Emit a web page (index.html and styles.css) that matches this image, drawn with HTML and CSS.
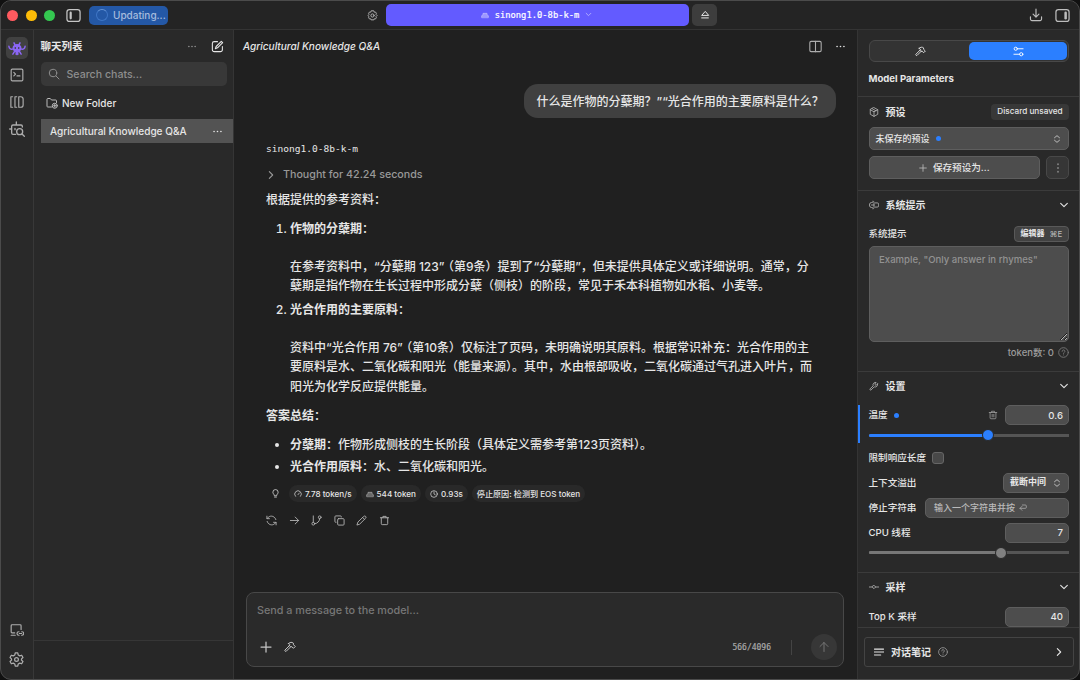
FILE: index.html
```html
<!DOCTYPE html>
<html lang="zh-CN">
  <head>
    <meta charset="UTF-8" />
    <meta name="viewport" content="width=device-width, initial-scale=1.0" />
    <title>Agricultural Knowledge Q&amp;A</title>
    <link rel="stylesheet" href="styles.css">
  </head>
  <body>
    <!-- Shared icons -->
    <svg class="sprite" aria-hidden="true">
      <symbol id="i-dots" viewBox="0 0 24 24"><path d="M4.500 12h.01M12 12h.01M19.500 12h.01" stroke-width="3.600"/></symbol>
      <symbol id="i-chevron" viewBox="0 0 24 24"><path d="m4 8 8 8 8-8" stroke-width="2.600"/></symbol>
      <symbol id="i-updown" viewBox="0 0 24 24"><path d="m6 9 6-5 6 5M6 15l6 5 6-5" stroke-width="2.400"/></symbol>
      <symbol id="i-plus" viewBox="0 0 24 24"><path d="M12 2v20M2 12h20" stroke-width="2.500"/></symbol>
      <symbol id="i-hammer" viewBox="0 0 24 24"><path d="m14 11-9.500 9.500a1.800 1.800 0 0 1-2.500-2.500L11.500 8.500M9 5c3-3 7-3 9.500-1l.5 3.500 3.500 3.500-3.500 3.500-3.500-3H13l-2.500-2.500C12.500 7.500 12 6 9 5z" stroke-width="2"/></symbol>
      <symbol id="i-help" viewBox="0 0 24 24"><circle cx="12" cy="12" r="10.500"/><path d="M9 9.500a3 3 0 1 1 4.500 2.500c-1 .6-1.500 1-1.500 2M12 17.300v.1"/></symbol>
      <symbol id="i-trash" viewBox="0 0 24 24"><path d="M3 6h18M8.500 6V3h7v3M5 6v13a2 2 0 0 0 2 2h10a2 2 0 0 0 2-2V6"/></symbol>
    </svg>

    <div class="window">
      <!-- Title bar -->
      <header class="titlebar">
        <div class="title-left">
          <span class="light light-red"></span>
          <span class="light light-yellow"></span>
          <span class="light light-green"></span>
          <svg class="icon icon-panel" viewBox="0 0 24 24"><rect x="1.500" y="2.500" width="21" height="19" rx="4"/><path d="M7.500 7.500v9" stroke-width="3.500"/></svg>
          <div class="updating"><span class="spinner"></span>Updating...</div>
        </div>
        <div class="title-center">
          <svg class="icon icon-gear" viewBox="0 0 24 24"><path d="m9 2.500-.8 2.300-2.400-.6L3.500 7l1 2.500L2 12l2.500 2.500-1 2.500 2.300 2.800 2.400-.6.8 2.300h6l.8-2.300 2.400.6 2.300-2.800-1-2.500L22 12l-2.500-2.500 1-2.500-2.300-2.800-2.400.6-.8-2.300z"/><circle cx="12" cy="12" r="3.500"/></svg>
          <div class="model-picker">
            <svg class="icon icon-model" viewBox="0 0 24 24"><path d="M2 19v-5l4-3V7h12v4l4 3v5z" fill="currentColor" fill-opacity=".6"/></svg>
            <span>sinong1.0-8b-k-m</span>
            <svg class="icon icon-small"><use href="#i-chevron"/></svg>
          </div>
          <div class="eject"><svg class="icon" viewBox="0 0 24 24"><path d="m12 4-8 9h16zM4 19h16" stroke-width="2.400"/></svg></div>
        </div>
        <div class="title-right">
          <svg class="icon" viewBox="0 0 24 24"><path d="M12 2v13M7 10.500l5 5 5-5M2.500 15v4a2.500 2.500 0 0 0 2.500 2.500h14a2.500 2.500 0 0 0 2.500-2.500v-4"/></svg>
          <svg class="icon icon-panel" viewBox="0 0 24 24"><rect x="1.500" y="2.500" width="21" height="19" rx="4"/><path d="M17 7.500v9" stroke-width="4"/></svg>
        </div>
      </header>

      <div class="workspace">
        <!-- Icon rail -->
        <nav class="rail">
          <div class="rail-active">
            <svg class="critter" viewBox="0 0 24 20"><path d="M9.500 5.500 8 2.500M14.500 5.500 16 2.500M7 10.500C4 11.500 1.500 10.500 1.200 7M17 10.500c3 1 5.500 0 5.800-3.500M9 13.500 6.500 17.500M15 13.500l2.500 4M11 14v4M13 14v4"/><path class="critter-body" fill-rule="evenodd" d="M12 4a6 5.500 0 1 0 0 11 6 5.500 0 1 0 0-11zM9.700 8a1 1.400 0 1 1 0 2.800 1 1.400 0 1 1 0-2.800zM14.300 8a1 1.400 0 1 1 0 2.800 1 1.400 0 1 1 0-2.800z"/></svg>
          </div>
          <svg class="icon" viewBox="0 0 24 24"><rect x="2" y="2" width="20" height="20" rx="2"/><path d="m6.500 7.500 3 3-3 3M12 13.500h5"/></svg>
          <svg class="icon" viewBox="0 0 24 24"><path d="M4.500 3H1.500v18h3M11.500 3h-3v18h3M15 3h3.500a4 4 0 0 1 4 4v10a4 4 0 0 1-4 4H15z"/></svg>
          <svg class="icon icon-find" viewBox="0 0 24 24"><path d="M10 20H6a2 2 0 0 1-2-2V8a2 2 0 0 1 2-2h12a2 2 0 0 1 2 2v1M11 6V1.500M4 12H1M9 11v2"/><circle cx="16" cy="16" r="4.500"/><path d="m19.500 19.500 3.500 3.500"/></svg>
          <div class="rail-space"></div>
          <svg class="icon" viewBox="0 0 24 24"><path d="M8 17H3.500A1.500 1.500 0 0 1 2 15.500v-11A1.500 1.500 0 0 1 3.500 3h14A1.500 1.500 0 0 1 19 4.500V11M2 21h7M15.500 15H15a3 3 0 0 0 0 6h.5M20 15h.5a3 3 0 0 1 0 6H20M16 18h4"/></svg>
          <svg class="icon icon-settings" viewBox="0 0 24 24"><path d="M10 1.500h4l.7 3.200 2.500 1.500 3.100-1 2 3.500L20 11v2l2.300 2.300-2 3.500-3.100-1-2.500 1.500-.7 3.200h-4l-.7-3.200-2.500-1.500-3.100 1-2-3.500L4 13v-2L1.700 8.700l2-3.500 3.100 1 2.500-1.500z"/><circle cx="12" cy="12" r="3"/></svg>
        </nav>

        <!-- Chat list -->
        <aside class="sidebar">
          <div class="sidebar-head">
            <strong>聊天列表</strong>
            <svg class="icon icon-more"><use href="#i-dots"/></svg>
            <svg class="icon icon-edit" viewBox="0 0 24 24"><path d="M12 3H6a3.500 3.500 0 0 0-3.500 3.500V18A3.500 3.500 0 0 0 6 21.500h11.500A3.500 3.500 0 0 0 21 18v-6M19 2.500l2.500 2.500-9.500 9.500-4 1.500 1.500-4z"/></svg>
          </div>
          <div class="search">
            <svg class="icon" viewBox="0 0 24 24"><circle cx="10" cy="10" r="7.500"/><path d="m16 16 6 6"/></svg>
            <span>Search chats...</span>
          </div>
          <div class="new-folder">
            <svg class="icon" viewBox="0 0 24 24"><path d="M11 20H3.500A1.500 1.500 0 0 1 2 18.500v-14A1.500 1.500 0 0 1 3.500 3h5L11 6h8.500A1.500 1.500 0 0 1 21 7.500V11"/><circle cx="17.500" cy="17.500" r="5"/><path d="M17.500 15v5M15 17.500h5"/></svg>
            <span>New Folder</span>
          </div>
          <div class="chat-item">
            <span>Agricultural Knowledge Q&amp;A</span>
            <svg class="icon icon-more"><use href="#i-dots"/></svg>
          </div>
          <div class="sidebar-foot"></div>
        </aside>

        <!-- Conversation -->
        <main class="chat">
          <div class="chat-head">
            <em>Agricultural Knowledge Q&amp;A</em>
            <svg class="icon icon-split" viewBox="0 0 24 24"><rect x="1.500" y="2.500" width="21" height="19" rx="2.500"/><path d="M12 2.500v19"/></svg>
            <svg class="icon icon-more"><use href="#i-dots"/></svg>
          </div>

          <div class="user-row"><div class="bubble">什么是作物的分蘖期？”“光合作用的主要原料是什么？</div></div>

          <article class="answer">
            <div class="model-name">sinong1.0-8b-k-m</div>
            <div class="thought"><svg class="icon turn"><use href="#i-chevron"/></svg>Thought for 42.24 seconds</div>
            <p>根据提供的参考资料：</p>
            <ol>
              <li>
                <b>作物的分蘖期</b>：
                <p>在参考资料中，“分蘖期 123”<span class="gap">（第9条）</span>提到了“分蘖期”，但未提供具体定义或详细说明。通常，分<br>蘖期是指作物在生长过程中形成分蘖（侧枝）的阶段，常见于禾本科植物如水稻、小麦等。</p>
              </li>
              <li>
                <b>光合作用的主要原料</b>：
                <p>资料中“光合作用 76”<span class="gap">（第10条）</span>仅标注了页码，未明确说明其原料。根据常识补充：光合作用的主<br>要原料是水、二氧化碳和阳光（能量来源）。其中，水由根部吸收，二氧化碳通过气孔进入叶片，而<br>阳光为化学反应提供能量。</p>
              </li>
            </ol>
            <p><b>答案总结</b>：</p>
            <ul>
              <li><b>分蘖期</b>：作物形成侧枝的生长阶段（具体定义需参考第123页资料）。</li>
              <li><b>光合作用原料</b>：水、二氧化碳和阳光。</li>
            </ul>

            <div class="stats">
              <svg class="icon bulb" viewBox="0 0 24 24"><path d="M9 17c0-3-4-4-4-8.500a7 7 0 0 1 14 0C19 13 15 14 15 17zM9.500 21.500h5"/></svg>
              <span class="pill"><svg class="icon" viewBox="0 0 24 24"><path d="M4.500 19a10 10 0 1 1 15 0M12 14l4-5"/></svg>7.78 token/s</span>
              <span class="pill"><svg class="icon icon-tokens" viewBox="0 0 24 24"><path d="M2 19v-5l4-3V7h12v4l4 3v5z" fill="currentColor" fill-opacity=".5"/></svg>544 token</span>
              <span class="pill"><svg class="icon" viewBox="0 0 24 24"><circle cx="12" cy="12" r="10"/><path d="M12 5.500V12l4 2.500"/></svg>0.93s</span>
              <span class="pill">停止原因: 检测到 EOS token</span>
            </div>

            <div class="actions">
              <svg class="icon" viewBox="0 0 24 24"><path d="M21.500 10A10 10 0 0 0 5 5L2 8M2 2.500V8h5.500M2.500 14A10 10 0 0 0 19 19l3-3M22 21.500V16h-5.500"/></svg>
              <svg class="icon" viewBox="0 0 24 24"><path d="M3 12h18M13.500 4.500 21 12l-7.500 7.500"/></svg>
              <svg class="icon" viewBox="0 0 24 24"><path d="M5 2v14M19 8a11 11 0 0 1-11 11"/><circle cx="5" cy="19" r="3"/><circle cx="19" cy="5" r="3"/></svg>
              <svg class="icon" viewBox="0 0 24 24"><rect x="8" y="8" width="14" height="14" rx="2"/><path d="M4.500 16A2 2 0 0 1 2 14V4a2 2 0 0 1 2-2h10a2 2 0 0 1 2 2.500"/></svg>
              <svg class="icon" viewBox="0 0 24 24"><path d="M17 3a2.800 2.800 0 0 1 4 4L8 20l-6 2 2-6zM14.500 5.500l4 4"/></svg>
              <svg class="icon"><use href="#i-trash"/></svg>
            </div>
          </article>

          <div class="composer">
            <span class="placeholder">Send a message to the model...</span>
            <div class="composer-tools">
              <svg class="icon"><use href="#i-plus"/></svg>
              <svg class="icon"><use href="#i-hammer"/></svg>
              <span class="count">566/4096</span>
              <span class="divider"></span>
              <span class="send"><svg class="icon" viewBox="0 0 24 24"><path d="M12 21V3M4 11l8-8 8 8"/></svg></span>
            </div>
          </div>
        </main>

        <!-- Model parameters -->
        <aside class="params">
          <div class="params-scroll">
            <section class="params-top">
              <div class="tabs">
                <span class="tab"><svg class="icon"><use href="#i-hammer"/></svg></span>
                <span class="tab active"><svg class="icon" viewBox="0 0 24 24"><circle cx="6" cy="6" r="3.500"/><path d="M9.500 6H22M2 18h12.500"/><circle cx="18" cy="18" r="3.500"/></svg></span>
              </div>
              <h3>Model Parameters</h3>
            </section>

            <section class="preset">
              <div class="section-head">
                <svg class="icon" viewBox="0 0 24 24"><path d="m12 1.500 9 5v11l-9 5-9-5v-11zM3 6.500l9 5 9-5M12 11.500v11M7.500 4l9 5"/></svg>
                <strong>预设</strong>
                <span class="button discard">Discard unsaved</span>
              </div>
              <div class="field preset-select"><span>未保存的预设</span><i class="dot"></i><svg class="icon"><use href="#i-updown"/></svg></div>
              <div class="preset-buttons">
                <div class="field save"><svg class="icon"><use href="#i-plus"/></svg>保存预设为...</div>
                <div class="field kebab"><svg class="icon turn"><use href="#i-dots"/></svg></div>
              </div>
            </section>

            <section class="prompt">
              <div class="section-head">
                <svg class="icon" viewBox="0 0 24 24"><path d="M8 6H6a5 6 0 0 0 0 12h2M9 3c3 0 3 1 3 3v12c0 2 0 3-3 3M6 12h6M15 7h5a3 3 0 0 1 3 3v4a3 3 0 0 1-3 3h-5"/></svg>
                <strong>系统提示</strong>
                <svg class="icon push"><use href="#i-chevron"/></svg>
              </div>
              <div class="prompt-label"><span>系统提示</span><span class="button editor"><b>编辑器</b> <kbd>⌘E</kbd></span></div>
              <textarea class="field" placeholder="Example, &quot;Only answer in rhymes&quot;"></textarea>
              <div class="tokens">token数: 0 <svg class="icon"><use href="#i-help"/></svg></div>
            </section>

            <section class="settings">
              <div class="section-head">
                <svg class="icon" viewBox="0 0 24 24"><path d="M20.500 7 17 10.500l-3.500-3L17 3.500a6 6 0 0 0-7 8L2.500 19A1.800 1.800 0 0 0 5 21.500L12.500 14a6 6 0 0 0 8-7z"/></svg>
                <strong>设置</strong>
                <svg class="icon push"><use href="#i-chevron"/></svg>
              </div>
              <div class="temperature">
                <div class="row"><span>温度</span><i class="dot"></i><svg class="icon trash" viewBox="0 0 24 24"><path d="M3 6h18M8.500 6V3h7v3M5 6v13a2 2 0 0 0 2 2h10a2 2 0 0 0 2-2V6M10 10.500v6M14 10.500v6"/></svg><span class="field number">0.6</span></div>
                <div class="slider blue"><i style="width: 59.5%"></i><b></b></div>
              </div>
              <div class="row limit"><span>限制响应长度</span><span class="checkbox"></span></div>
              <div class="row"><span>上下文溢出</span><span class="field overflow">截断中间<svg class="icon"><use href="#i-updown"/></svg></span></div>
              <div class="row"><span>停止字符串</span><span class="field stop">输入一个字符串并按 <svg class="icon" viewBox="0 0 24 24"><path d="M10 3h9a3 3 0 0 1 3 3v4a3 3 0 0 1-3 3H3M9 7l-6 6 6 6"/></svg></span></div>
              <div class="row cpu"><span>CPU 线程</span><span class="field number">7</span></div>
              <div class="slider"><i style="width: 66%"></i><b></b></div>
            </section>

            <section class="sampling">
              <div class="section-head">
                <svg class="icon" viewBox="0 0 24 24"><path d="M0 12h8M16 12h8M12 8l4 4-4 4-4-4z"/></svg>
                <strong>采样</strong>
                <svg class="icon push"><use href="#i-chevron"/></svg>
              </div>
              <div class="row"><span>Top K 采样</span><span class="field number">40</span></div>
            </section>
          </div>
          <div class="notes">
            <div class="notes-box">
              <svg class="icon" viewBox="0 0 24 24"><path d="M1 5h22M1 12h22M1 19h15" stroke-width="2.600"/></svg>
              <strong>对话笔记</strong>
              <svg class="icon help"><use href="#i-help"/></svg>
              <svg class="icon turn push"><use href="#i-chevron"/></svg>
            </div>
          </div>
        </aside>
      </div>
    </div>
  </body>
</html>
```
FILE: styles.css
```css
* {
  box-sizing: border-box;
}

body {
  margin: 0;
  background: #111;
  color: #e6e6e6;
  font: 500 10px/1.2 Inter, "Noto Sans CJK SC", sans-serif;
}

.sprite {
  display: none;
}

.icon {
  display: block;
  flex: none;
  width: 12px;
  height: 12px;
  fill: none;
  stroke: currentColor;
  stroke-width: 2;
  stroke-linecap: round;
  stroke-linejoin: round;
}

.turn {
  transform: rotate(-90deg);
}

.push {
  margin-left: auto;
}

.window {
  display: flex;
  flex-direction: column;
  width: 1080px;
  height: 680px;
  overflow: hidden;
  border: 1px solid #4b4b4b;
  border-radius: 11px;
  background: #292929;
}

/* Title bar */
.titlebar {
  display: grid;
  grid-template-columns: 366px 351px 1fr;
  height: 29px;
  border-bottom: 1px solid #343434;
  background: #242424;
}

.title-left,
.title-center,
.title-right {
  display: flex;
  align-items: center;
}

.title-left {
  padding-left: 6px;
  color: #c6c6c6;
}

.light {
  width: 11px;
  height: 11px;
  margin-right: 7.500px;
  border-radius: 50%;
}

.light-red {
  background: #ff5a5f;
}

.light-yellow {
  background: #fdbc08;
}

.light-green {
  background: #34c750;
}

.icon-panel {
  width: 15px;
  height: 15px;
}

.title-left .icon-panel {
  margin-left: 3.500px;
}

.updating {
  display: flex;
  align-items: center;
  width: 79px;
  height: 19px;
  margin-left: 8px;
  padding-left: 7px;
  border-radius: 5px;
  background: #2458a6;
  color: #a6bcdd;
}

.spinner {
  width: 12px;
  height: 12px;
  margin-right: 5px;
  border: 1.500px solid #3e75c5;
  border-top-color: #6694d5;
  border-radius: 50%;
}

.icon-gear {
  width: 11px;
  height: 11px;
  margin-right: 8px;
  color: #b9b9b9;
}

.model-picker {
  display: flex;
  align-items: center;
  justify-content: center;
  gap: 6px;
  width: 303px;
  height: 22px;
  flex: none;
  padding: 0 2px 1px 0;
  border-radius: 5px;
  background: #635bff;
  color: #fff;
  font: 500 8.800px "DejaVu Sans Mono", monospace;
  -webkit-text-stroke: 0.200px #fff;
}

.icon-model {
  width: 8px;
  height: 8px;
  color: #c4c0ff;
}

.icon-small {
  width: 7px;
  height: 7px;
  color: #c4c0ff;
}

.eject {
  display: flex;
  align-items: center;
  justify-content: center;
  flex: none;
  width: 25px;
  height: 22px;
  margin-left: 3px;
  border-radius: 5px;
  background: #3d3d3d;
}

.eject .icon {
  width: 10px;
  height: 10px;
}

.title-right {
  justify-content: flex-end;
  gap: 12px;
  padding-right: 9px;
  color: #bdbdbd;
}

.title-right .icon:first-child {
  width: 14px;
  height: 14px;
}

/* Columns */
.workspace {
  display: grid;
  grid-template-columns: 33px 200px 624px 1fr;
  flex: 1;
  min-height: 0;
}

/* Icon rail */
.rail {
  display: flex;
  flex-direction: column;
  align-items: center;
  padding: 7px 1px 12px 0;
  border-right: 1px solid #383838;
  color: #adadad;
}

.rail-active {
  display: flex;
  align-items: center;
  justify-content: center;
  width: 22px;
  height: 22px;
  margin-bottom: 9px;
  border-radius: 5px;
  background: #414141;
}

.critter {
  width: 18px;
  height: 15px;
  fill: none;
  stroke: #8b66f5;
  stroke-width: 2;
  stroke-linecap: round;
}

.critter-body {
  fill: #8b66f5;
  stroke: none;
}

.rail > .icon {
  width: 14px;
  height: 14px;
  margin-bottom: 13px;
}

.rail > .icon-find {
  width: 16px;
  height: 16px;
  margin-top: -1px;
}

.rail-space {
  flex: 1;
}

.rail > .icon-settings {
  width: 15px;
  height: 15px;
  margin: 2px 0 0;
}

/* Chat list */
.sidebar {
  display: flex;
  flex-direction: column;
  border-right: 1px solid #353535;
}

.sidebar-head {
  display: flex;
  align-items: center;
  height: 32px;
  padding: 0 9px 0 6.500px;
  font-size: 10.500px;
}

.sidebar-head strong {
  padding-top: 2px;
}

.icon-more {
  width: 11px;
  height: 11px;
}

.sidebar-head .icon-more {
  margin: 0 14px 0 auto;
  width: 10px;
  color: #999;
}

.icon-edit {
  width: 13px;
  height: 13px;
}

.search {
  display: flex;
  align-items: center;
  gap: 7px;
  height: 24px;
  margin: 0 6px 0 6.500px;
  padding: 0 0 0 7px;
  border-radius: 5px;
  background: #383838;
  color: #8e8e8e;
  font-size: 10.600px;
}

.search span {
  padding-top: 2px;
}

.new-folder {
  display: flex;
  align-items: center;
  gap: 4px;
  height: 33px;
  padding-left: 12px;
}

.new-folder .icon {
  color: #bcbcbc;
}

.chat-item {
  display: flex;
  align-items: center;
  justify-content: space-between;
  height: 24px;
  margin-left: 6.500px;
  padding: 0 10px 0 9.500px;
  background: #535353;
  font-size: 10.050px;
}

.sidebar-foot {
  height: 39px;
  margin-top: auto;
  border-top: 1px solid #363636;
  background: #272727;
}

/* Conversation */
.chat {
  display: flex;
  flex-direction: column;
  padding: 0 13px 12px 12px;
  border-right: 1px solid #343434;
  background: #202020;
}

.chat-head {
  display: flex;
  align-items: center;
  height: 32px;
  margin: 0 -2px 0 -3px;
  font-size: 10.050px;
}

.icon-split {
  width: 13px;
  height: 13px;
  margin: 0 13px 0 auto;
  color: #acacac;
}

.user-row {
  display: flex;
  justify-content: flex-end;
  margin: 22px 8px 0;
}

.bubble {
  width: 312.500px;
  height: 34px;
  padding: 1px 0 0 13px;
  border-radius: 14px;
  background: #404040;
  font-size: 12px;
  line-height: 34px;
  white-space: nowrap;
}

.answer {
  margin: 23px 0 0 20px;
  font-size: 12px;
  line-height: 19.300px;
}

.model-name {
  height: 15px;
  font: 500 9.550px/15px "DejaVu Sans Mono", monospace;
}

.thought {
  display: flex;
  align-items: center;
  gap: 7px;
  height: 17px;
  margin: 10px 0 6.500px;
  color: #999;
  font-size: 10.700px;
}

.thought .icon {
  width: 10px;
  height: 10px;
}

.answer p,
.answer ol,
.answer ul {
  margin: 0;
}

.answer ol,
.answer ul {
  padding-left: 24px;
  white-space: nowrap;
}

.answer ol {
  margin: 10px 0;
}

.answer ol li + li {
  margin-top: 4px;
}

.answer li p {
  margin-top: 19px;
}

.gap {
  margin-left: 3.500px;
}

.answer ul {
  margin-top: 10px;
}

.answer ul li + li {
  margin-top: 3px;
}

.stats {
  display: flex;
  align-items: center;
  gap: 4px;
  height: 18px;
  margin: 8px 0 0 5px;
  font-size: 8.100px;
  line-height: 16px;
}

.stats .icon {
  width: 8px;
  height: 8px;
}

.stats .bulb {
  width: 9px;
  height: 9px;
  margin-right: 5px;
}

.stats .icon-tokens {
  color: #aaa;
}

.pill {
  display: flex;
  align-items: center;
  gap: 3px;
  height: 17px;
  padding: 0 5px;
  border-radius: 9px;
  background: #292929;
  white-space: nowrap;
}

.actions {
  display: flex;
  gap: 11.500px;
  margin-top: 12px;
  color: #b0b0b0;
}

.actions .icon {
  width: 11px;
  height: 11px;
}

.composer {
  display: flex;
  flex-direction: column;
  justify-content: space-between;
  height: 75px;
  margin-top: auto;
  padding: 10px 6px 6px 10px;
  border: 1px solid #484848;
  border-radius: 8px;
  background: #2a2a2a;
}

.placeholder {
  color: #777;
  font-size: 10.800px;
  line-height: 15px;
}

.composer-tools {
  display: flex;
  align-items: center;
  height: 26px;
  padding-left: 3px;
}

.composer-tools > .icon {
  margin-right: 12px;
  color: #c5c5c5;
}

.count {
  margin-left: auto;
  color: #a8a8a8;
  font: 500 8px "DejaVu Sans Mono", monospace;
  -webkit-text-stroke: 0.200px #a8a8a8;
}

.divider {
  width: 1px;
  height: 15px;
  margin: 0 19px 0 20px;
  background: #444;
}

.send {
  display: flex;
  align-items: center;
  justify-content: center;
  width: 26px;
  height: 26px;
  border-radius: 50%;
  background: #373737;
  color: #747474;
}

/* Parameters */
.params {
  display: flex;
  flex-direction: column;
  min-width: 0;
}

.params-scroll {
  height: 597px;
  overflow: hidden;
}

.params section {
  padding: 0 10px 0 10.500px;
  border-bottom: 1px solid #3b3b3b;
}

.params section.sampling {
  border-bottom: 0;
}

.params-top {
  height: 67px;
}

.params section.params-top {
  padding-top: 10px;
}

.tabs {
  display: flex;
  height: 22px;
  padding: 1px 1px 1px 2px;
  border: 1px solid #484848;
  border-radius: 6px;
  background: #333;
}

.tab {
  display: flex;
  align-items: center;
  justify-content: center;
  flex: 1;
  border-radius: 5px;
}

.tab .icon {
  width: 11px;
  height: 11px;
}

.tab.active {
  background: #2b7fff;
  color: #fff;
}

h3 {
  margin: 10.500px 0 0;
  font-size: 9.600px;
  font-weight: 700;
}

.section-head {
  display: flex;
  align-items: center;
  height: 29px;
  padding-bottom: 2px;
}

.preset .section-head {
  padding: 0;
}

.section-head > .icon:first-child {
  width: 10px;
  height: 10px;
  margin-right: 7px;
  color: #b4b4b4;
}

.section-head > .push {
  width: 10px;
  height: 10px;
}

.button {
  display: flex;
  align-items: center;
  justify-content: center;
  height: 16px;
  margin-left: auto;
  border-radius: 4px;
  background: #383838;
  white-space: nowrap;
  font-size: 8.200px;
}

.discard {
  width: 78px;
  padding-top: 1px;
}

.field {
  display: flex;
  align-items: center;
  border: 1px solid #5e5e5e;
  border-radius: 5px;
  background: #4d4d4d;
}

.field .icon {
  color: #bbb;
}

.preset {
  height: 94px;
}

.preset-select {
  height: 23px;
  margin: 1px 0 6px;
  padding: 0 6px;
  font-size: 9px;
}

.preset-select span {
  padding-top: 1px;
}

.preset-select .icon {
  width: 10px;
  height: 10px;
  margin-left: auto;
}

.dot {
  width: 5px;
  height: 5px;
  margin-left: 6px;
  border-radius: 50%;
  background: #2b7fff;
}

.preset-buttons {
  display: flex;
  gap: 6px;
}

.save {
  flex: 1;
  height: 23px;
  justify-content: center;
  gap: 6px;
  font-size: 9.600px;
}

.save .icon {
  width: 8px;
  height: 8px;
}

.kebab {
  width: 23px;
  height: 23px;
  justify-content: center;
  background: #363636;
  border-color: #484848;
}

.kebab .icon {
  color: #888;
}

.prompt {
  height: 181px;
}

.prompt-label {
  display: flex;
  align-items: center;
  height: 16px;
  margin: 6px 0 4px;
  font-size: 9.500px;
}

.editor {
  gap: 5px;
  width: 55px;
  border: 1px solid #595959;
  background: #424242;
  font-size: 8px;
}

kbd {
  font: 8px Inter, "DejaVu Sans", sans-serif;
  color: #bcbcbc;
}

textarea {
  display: block !important;
  width: 100%;
  height: 96px;
  padding: 7px 9.500px;
  outline: 0;
  font: 500 9.600px/12px Inter, sans-serif;
}

textarea::placeholder {
  color: #929292;
}

.tokens {
  display: flex;
  align-items: center;
  justify-content: flex-end;
  gap: 4px;
  height: 21px;
  color: #9c9c9c;
  font-size: 9.500px;
}

.tokens .icon {
  width: 11px;
  height: 11px;
  color: #777;
}

.settings {
  height: 201px;
}

.temperature {
  height: 38px;
  margin: 4px 0 3px -10.500px;
  padding-left: 8.500px;
  border-left: 2px solid #2b7fff;
}

.row {
  display: flex;
  align-items: center;
  height: 25px;
  font-size: 9.600px;
}

.row .field {
  height: 20px;
  margin-left: auto;
}

.row .number {
  width: 64px;
  justify-content: flex-end;
  padding: 1px 5px 0 0;
}

.temperature .row {
  height: 20px;
}

.temperature .trash {
  width: 10px;
  height: 10px;
  margin-left: auto;
  color: #999;
}

.temperature .number {
  margin-left: 7px;
}

.slider {
  display: flex;
  align-items: center;
  height: 20px;
  background: linear-gradient(#555, #555) center / 100% 3px no-repeat;
}

.cpu + .slider {
  height: 15px;
}

.slider i {
  height: 3px;
  border-radius: 2px;
  background: #777;
}

.slider b {
  width: 12px;
  height: 12px;
  margin-left: -6px;
  border: 1px solid #292929;
  border-radius: 50%;
  background: #808080;
}

.slider.blue i,
.slider.blue b {
  background: #2b7fff;
}

.limit {
  height: 24px;
}

.checkbox {
  width: 12px;
  height: 12px;
  margin-left: 6px;
  border: 1px solid #666;
  border-radius: 3px;
  background: #484848;
}

.row .overflow {
  width: 66px;
  justify-content: space-between;
  padding: 0 6px;
  font-size: 9px;
  font-weight: 700;
}

.overflow .icon {
  width: 10px;
  height: 10px;
}

.row .stop {
  width: 144px;
  padding: 1px 0 0 8px;
  gap: 4px;
  color: #bababa;
  font-size: 9px;
}

.stop .icon {
  width: 8px;
  height: 8px;
}

.sampling .row {
  margin-top: 2px;
}

.notes {
  flex: 1;
  padding: 9px 5px 12px 6px;
  border-top: 1px solid #3b3b3b;
}

.notes-box {
  display: flex;
  align-items: center;
  height: 30px;
  padding: 0 9px;
  border: 1px solid #444;
  border-radius: 3px;
}

.notes-box .icon {
  width: 10px;
  height: 10px;
}

.notes-box strong {
  margin: 0 7px;
}

.notes-box .help {
  color: #999;
}
```
